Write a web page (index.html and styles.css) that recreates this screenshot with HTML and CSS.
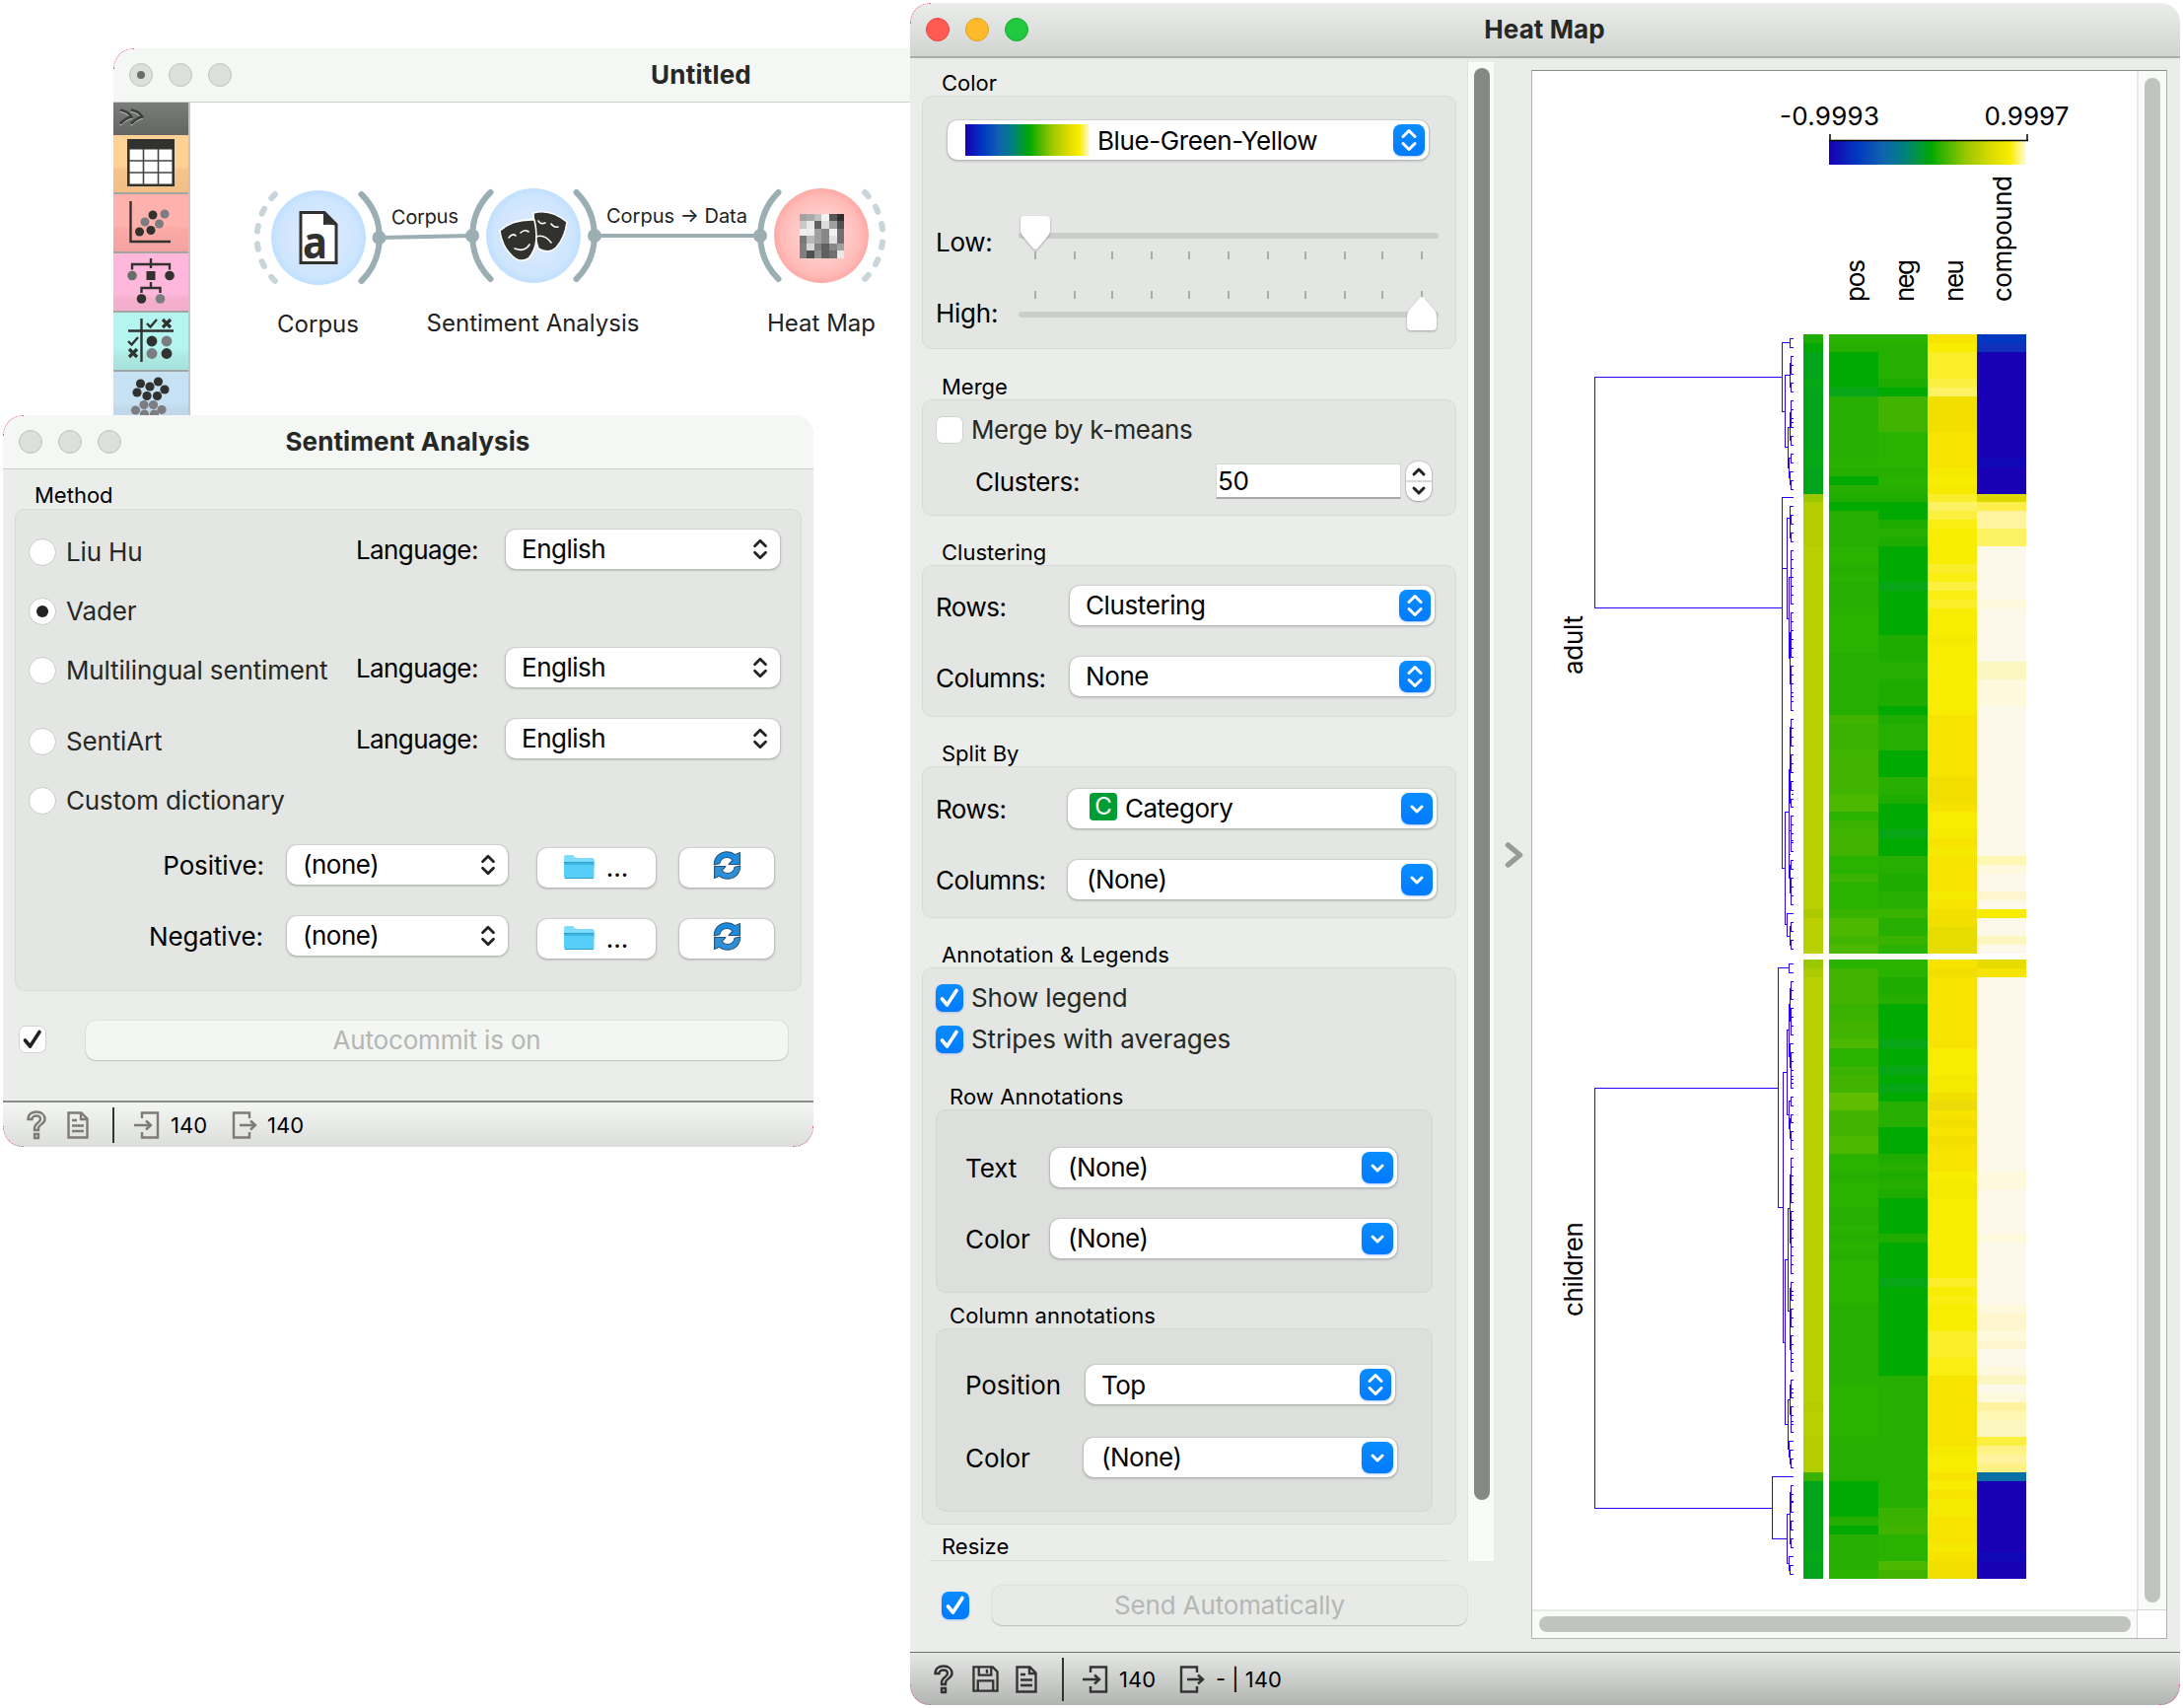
FILE: index.html
```html
<!DOCTYPE html>
<html lang="en">
<head>
<meta charset="utf-8">
<title>Heat Map</title>
<link rel="stylesheet" href="styles.css">
</head>
<body>
<svg class="defs" aria-hidden="true">
  <defs>
    <symbol id="updown" viewBox="0 0 16 24"><path d="M2 8.5 8 2.5l6 6M2 15.5l6 6 6-6"/></symbol>
    <symbol id="down" viewBox="0 0 16 24"><path d="M3 10l5 5 5-5"/></symbol>
    <symbol id="tick" viewBox="0 0 28 28"><path d="M6.500 15l5 6L21 6.500"/></symbol>
    <symbol id="folder" viewBox="0 0 32 26"><path fill="#7fdcfb" d="M1 3q0-2 2-2h7l3 3h17q1.500 0 1.500 2v8H1z"/><path fill="#3fb6e2" d="M1 8h30.500v4H1z"/><path fill="#57cef9" d="M1 11h30.500v12q0 1.500-1.500 1.500H2.500Q1 24.500 1 23z"/><path fill="#2aa3d6" d="M1 8h30.500v1H1zM2 24h29v1H2z"/></symbol>
    <symbol id="reload" viewBox="0 0 28 28"><g stroke="#24507a" stroke-width="1" stroke-linejoin="round"><path fill="#1c8ade" d="M1.200 13.500C1 6 7 .8 13.800.8c3.200 0 6 1.100 7.900 2.700L26.500 1.500v11.500H15.500L19.300 8.800C17.700 7.200 16 6.300 14 6.300c-4.200 0-6.800 3-7.300 6z"/><path fill="#2f8fd6" d="M26.800 14.500c.2 7.500-5.800 12.700-12.600 12.700-3.200 0-6-1.100-7.900-2.700L1.500 26.500V15h11l-3.800 4.200c1.600 1.600 3.300 2.500 5.300 2.500 4.200 0 6.800-3 7.300-6z"/></g></symbol>
    <symbol id="help" viewBox="0 0 20 30"><path d="M1.500 9C1.500 4 5 1.500 10 1.500S18.500 4.500 18.500 9c0 5-6.500 5.500-6.500 9v2H8v-2c0-5 6-5.500 6-9 0-2-1.500-3.500-4-3.500S5.500 7 5.500 9zM8 24h4v4H8z"/></symbol>
    <symbol id="doc" viewBox="0 0 22 28"><path d="M1.500 1.500h13l6 6v19h-19zM14 2v6h6M5 9h5M5 14.500h12M5 20h12"/></symbol>
    <symbol id="save" viewBox="0 0 28 28"><path d="M1.500 1.500h20l5 5v20h-25zM7 2v8h13V2M6 26V16h16v10M15.500 4v4"/></symbol>
    <symbol id="in" viewBox="0 0 26 28"><path d="M8 7V1.500h16v25H8V21M0 14h16M12 9.500l5 4.500-5 4.500"/></symbol>
    <symbol id="out" viewBox="0 0 26 28"><path d="M18 7V1.500H2v25h16V21M8 14h15M19 9.500l5 4.500-5 4.500"/></symbol>
  </defs>
</svg>

<section class="window canvas-window">
  <header class="titlebar"><div class="lights"><i class="edited"></i><i></i><i></i></div><h1>Untitled</h1></header>
  <div class="canvas-body">
    <nav class="dock">
      <div class="dock-head"><svg width="30" height="22"><path d="M2 4c5 1 9 3 11 7-4 1-8 4-11 7M13 4c5 1 9 3 11 7-4 1-8 4-11 7" fill="none" stroke="#c9cbc8" stroke-width="1.600"/><path d="M2 2.500c5 1 9 3 11 7-4 1-8 4-11 7M13 2.500c5 1 9 3 11 7-4 1-8 4-11 7" fill="none" stroke="#3c3e3c" stroke-width="2.800"/></svg></div>
      <div class="dock-item data"><svg width="48" height="48" viewBox="0 0 48 48"><path fill="#fff" stroke="#31312f" stroke-width="2.600" d="M1.300 1.300h45.400v45.400H1.300z"/><path fill="#31312f" d="M0 0h48v10.500H0z"/><path stroke="#444" d="M16.500 10v37M31.500 10v37M2 22h44M2 34h44" stroke-width="1.600"/></svg></div>
      <div class="dock-item visualize"><svg width="48" height="48" viewBox="0 0 48 48"><path d="M3.500 3v41H44" fill="none" stroke="#31312f" stroke-width="2.400"/><g fill="#31312f"><circle cx="26" cy="17" r="4.500"/><circle cx="12.500" cy="34" r="4.500"/><circle cx="24" cy="32.500" r="4.500"/></g><g fill="#7b7d80"><circle cx="38" cy="16" r="4.500"/><circle cx="18" cy="24" r="4.500"/><circle cx="32.500" cy="26" r="4.500"/></g></svg></div>
      <div class="dock-item model"><svg width="48" height="48" viewBox="0 0 48 48"><path d="M5 12.500V7h38v5.500M24 1v10M14.500 36v-5h19v5M24 25v6" fill="none" stroke="#31312f" stroke-width="2.400"/><path fill="#31312f" d="M19.500 14h9v9h-9z"/><circle cx="5" cy="18.500" r="4.800" fill="#6b6d6b"/><circle cx="43" cy="18.500" r="4.800" fill="#31312f"/><circle cx="14.500" cy="42" r="4.800" fill="#31312f"/><circle cx="33.500" cy="42" r="4.800" fill="#7b7d80"/></svg></div>
      <div class="dock-item evaluate"><svg width="48" height="48" viewBox="0 0 48 48"><path d="M14.500 2v44M1 14.500h46M20 7l3.500 3.500L30 3M1 25l3.500 3.500L11 21" fill="none" stroke="#31312f" stroke-width="2.400"/><path d="M36 3l8 8m0-8l-8 8M2 33l8 8m0-8l-8 8" stroke="#31312f" stroke-width="3.200"/><g fill="#31312f"><circle cx="25" cy="25" r="5.400"/><circle cx="40" cy="37.500" r="5.400"/></g><g fill="#7b7d80"><circle cx="40" cy="25" r="5.400"/><circle cx="25" cy="37.500" r="5.400"/></g></svg></div>
      <div class="dock-item unsupervised"><svg width="48" height="48" viewBox="0 0 48 48"><g fill="#31312f"><circle cx="13.500" cy="8" r="4.600"/><circle cx="31.500" cy="6" r="4.600"/><circle cx="23" cy="11" r="4.600"/><circle cx="38" cy="14" r="4.600"/><circle cx="10" cy="17" r="4.600"/><circle cx="20" cy="20.500" r="4.600"/><circle cx="30.500" cy="20.500" r="4.600"/></g><g fill="#7b7d80"><circle cx="17" cy="29.500" r="4.600"/><circle cx="26.500" cy="29.500" r="4.600"/><circle cx="8.500" cy="35" r="4.600"/><circle cx="35" cy="34.500" r="4.600"/><circle cx="17.500" cy="39" r="4.600"/><circle cx="27.500" cy="39" r="4.600"/></g></svg></div>
    </nav>
    <svg class="flow" viewBox="193 104 730 320" width="730" height="320">
      <defs>
        <radialGradient id="blue"><stop offset="0" stop-color="#e2ebfb"/><stop offset=".5" stop-color="#d6e8fe"/><stop offset=".85" stop-color="#cde5fe"/><stop offset="1" stop-color="#c0dfff"/></radialGradient>
        <radialGradient id="red"><stop offset="0" stop-color="#ffdad8"/><stop offset=".5" stop-color="#ffcbc8"/><stop offset=".85" stop-color="#ffbab6"/><stop offset="1" stop-color="#ffa9a5"/></radialGradient>
      </defs>
      <g fill="none" stroke="#9aaeb3" stroke-width="6" stroke-linecap="round">
        <path d="M366.500 197A62 62 0 0 1 366.500 285M497.500 195A62 62 0 0 0 497.500 283M584.500 195A62 62 0 0 1 584.500 283M789.500 195A62 62 0 0 0 789.500 283"/>
        <path d="M385 241L479 239M603 239H771" stroke-width="4"/>
        <g stroke="#c8d5da" stroke-dasharray="5.500 12.900"><path d="M279 197A62 62 0 0 0 279 285M877 195A62 62 0 0 1 877 283"/></g>
      </g>
      <g fill="#9aaeb3"><circle cx="384.500" cy="241" r="7"/><circle cx="479" cy="239" r="7"/><circle cx="603" cy="239" r="7"/><circle cx="771" cy="239" r="7"/></g>
      <circle cx="323" cy="241" r="48" fill="url(#blue)"/><circle cx="541" cy="239" r="48" fill="url(#blue)"/><circle cx="833" cy="239" r="48" fill="url(#red)"/>
      <path d="M305 215.500h24l12 12V266.500H305z" fill="#fff" stroke="#31312f" stroke-width="3"/><path d="M328 214v14q7-1 14 1v-2z" fill="#31312f"/>
      <text x="307" y="262" class="glyph-a" textLength="25" lengthAdjust="spacingAndGlyphs">a</text>
      <g fill="#31312f" stroke="#fff" stroke-width="1.600" stroke-linejoin="round">
        <path d="M541 216q17-5 34 9-2 16-11 26-8 7-18 1l-4-14z"/>
        <path d="M507 234q13-12 35-11 6 26-6 39-8 5-16-2-11-10-13-26z"/>
        <g fill="none" stroke-linecap="round"><path d="M546 224q2 4 7 2M559 227q3 4 7 3M544 240q8-3 15 6M516 241q4-5 7-2M528 236q4-4 8-1M522 252q10 4 15-4"/></g>
      </g>
      <g id="mosaic" shape-rendering="crispEdges"></g>
      <g class="link-label"><text x="397" y="227.500" textLength="68" transform="rotate(-1.200 397 227.500)">Corpus</text><text x="615" y="226" textLength="143">Corpus → Data</text></g>
      <g class="node-label"><text x="322.500" y="337">Corpus</text><text x="540.500" y="335.500">Sentiment Analysis</text><text x="833" y="335.500">Heat Map</text></g>
    </svg>
  </div>
</section>

<section class="window sentiment-window">
  <header class="titlebar"><div class="lights"><i></i><i></i><i></i></div><h1>Sentiment Analysis</h1></header>
  <div class="sentiment-body">
    <h2>Method</h2>
    <div class="group method">
      <div class="row"><span class="radio"><i></i>Liu Hu</span><span class="lang">Language:</span><span class="select plain">English<svg class="arrows"><use href="#updown"/></svg></span></div>
      <div class="row"><span class="radio on"><i></i>Vader</span></div>
      <div class="row"><span class="radio"><i></i>Multilingual sentiment</span><span class="lang">Language:</span><span class="select plain">English<svg class="arrows"><use href="#updown"/></svg></span></div>
      <div class="row gap-top"><span class="radio"><i></i>SentiArt</span><span class="lang">Language:</span><span class="select plain">English<svg class="arrows"><use href="#updown"/></svg></span></div>
      <div class="row"><span class="radio"><i></i>Custom dictionary</span></div>
      <div class="row file-row"><span class="file-label">Positive:</span><span class="select plain">(none)<svg class="arrows"><use href="#updown"/></svg></span><span class="button browse"><svg><use href="#folder"/></svg>...</span><span class="button reload"><svg><use href="#reload"/></svg></span></div>
      <div class="row file-row second"><span class="file-label">Negative:</span><span class="select plain">(none)<svg class="arrows"><use href="#updown"/></svg></span><span class="button browse"><svg><use href="#folder"/></svg>...</span><span class="button reload"><svg><use href="#reload"/></svg></span></div>
    </div>
    <div class="commit"><span class="check dark"><svg><use href="#tick"/></svg></span><span class="commit-button">Autocommit is on</span></div>
  </div>
  <footer class="statusbar"><svg class="i-help"><use href="#help"/></svg><svg class="i-doc"><use href="#doc"/></svg><b></b><svg class="i-io"><use href="#in"/></svg><span class="n-in">140</span><svg class="i-io"><use href="#out"/></svg><span>140</span></footer>
</section>

<section class="window heat-window">
  <header class="titlebar"><div class="lights"><i class="r"></i><i class="y"></i><i class="g"></i></div><h1>Heat Map</h1></header>
  <div class="heat-body">
    <aside class="sidebar">
      <div class="scroller">
        <div class="controls">
          <h2>Color</h2>
          <div class="group color-group">
            <span class="select palette-select"><i class="palette"></i>Blue-Green-Yellow<svg class="knob"><use href="#updown"/></svg></span>
            <div class="slider-row"><label>Low:</label><svg width="428" height="50" viewBox="1032 216 428 50"><path d="M1036 239H1456" class="track"/><path class="ticks" d="M1050 255v8M1090 255v8M1128 255v8M1168 255v8M1206 255v8M1246 255v8M1286 255v8M1324 255v8M1364 255v8M1402 255v8M1442 255v8"/><path class="thumb" d="M1039 219h22q4 0 4 4v11q0 3-2 5l-10 12q-3 4-6 0l-10-12q-2-2-2-5v-11q0-4 4-4z"/></svg></div>
            <div class="slider-row high"><label>High:</label><svg width="428" height="50" viewBox="1032 290 428 50"><path d="M1036 319H1456" class="track"/><path class="ticks" d="M1050 295v8M1090 295v8M1128 295v8M1168 295v8M1206 295v8M1246 295v8M1286 295v8M1324 295v8M1364 295v8M1402 295v8M1442 295v8"/><path class="thumb" d="M1431 335h22q4 0 4-4v-11q0-3-2-5l-10-12q-3-4-6 0l-10 12q-2 2-2 5v11q0 4 4 4z"/></svg></div>
          </div>
          <h2 class="h-merge">Merge</h2>
          <div class="group merge-group">
            <div class="check-row"><span class="check off"></span>Merge by k-means</div>
            <div class="spin-row"><label>Clusters:</label><span class="spin-field">50</span><span class="stepper"><svg width="26" height="40" viewBox="0 0 26 40"><path d="M8 13l5-5 5 5M8 27l5 5 5-5" fill="none" stroke="#222" stroke-width="3" stroke-linecap="round" stroke-linejoin="round"/><path d="M0 20h26" stroke="#ccc" stroke-width="1.500"/></svg></span></div>
          </div>
          <h2 class="h-cluster">Clustering</h2>
          <div class="group pair-group">
            <div class="field"><label>Rows:</label><span class="select">Clustering<svg class="knob"><use href="#updown"/></svg></span></div>
            <div class="field"><label>Columns:</label><span class="select">None<svg class="knob"><use href="#updown"/></svg></span></div>
          </div>
          <h2 class="h-split">Split By</h2>
          <div class="group pair-group wide">
            <div class="field"><label>Rows:</label><span class="select"><i class="cat">C</i>Category<svg class="knob"><use href="#down"/></svg></span></div>
            <div class="field"><label>Columns:</label><span class="select">(None)<svg class="knob"><use href="#down"/></svg></span></div>
          </div>
          <h2 class="h-annot">Annotation &amp; Legends</h2>
          <div class="group annot-group">
            <div class="check-row"><span class="check"><svg><use href="#tick"/></svg></span>Show legend</div>
            <div class="check-row"><span class="check"><svg><use href="#tick"/></svg></span>Stripes with averages</div>
            <h2>Row Annotations</h2>
            <div class="group inner row-inner">
              <div class="field"><label>Text</label><span class="select">(None)<svg class="knob"><use href="#down"/></svg></span></div>
              <div class="field"><label>Color</label><span class="select">(None)<svg class="knob"><use href="#down"/></svg></span></div>
            </div>
            <h2 class="h-col">Column annotations</h2>
            <div class="group inner col-inner">
              <div class="field"><label>Position</label><span class="select popup">Top<svg class="knob"><use href="#updown"/></svg></span></div>
              <div class="field"><label>Color</label><span class="select">(None)<svg class="knob"><use href="#down"/></svg></span></div>
            </div>
          </div>
          <h2 class="h-resize">Resize</h2>
          <div class="group resize-group"></div>
        </div>
        <div class="scrollbar"><i></i></div>
      </div>
      <div class="commit"><span class="check"><svg><use href="#tick"/></svg></span><span class="commit-button">Send Automatically</span></div>
    </aside>
    <div class="splitter"><svg width="20" height="26" viewBox="0 0 20 26"><path d="M3.500 3l12 10-12 10" fill="none" stroke="#999b99" stroke-width="5.500" stroke-linejoin="round" stroke-linecap="round"/></svg></div>
    <div class="view">
      <svg class="plot" id="plot" viewBox="1554 72 613 1560" width="613" height="1560">
        <defs><linearGradient id="ramp"><stop offset="0" stop-color="#1800b4"/><stop offset=".14" stop-color="#0037c0"/><stop offset=".27" stop-color="#1062b0"/><stop offset=".38" stop-color="#008080"/><stop offset=".52" stop-color="#00aa00"/><stop offset=".56" stop-color="#29b000"/><stop offset=".7" stop-color="#9cc800"/><stop offset=".83" stop-color="#dfdc00"/><stop offset=".92" stop-color="#f8ed00"/><stop offset=".97" stop-color="#fff78c"/><stop offset="1" stop-color="#fcf9ea"/></linearGradient></defs>
        <path fill="url(#ramp)" d="M1855 143h200v24H1855z"/>
        <path d="M1856 136v7M2056 136v7M1855 142.500h202" fill="none" stroke="#000" stroke-width="1.500"/>
        <g class="plot-text"><text x="1805" y="127" textLength="101">-0.9993</text><text x="2012.500" y="127" textLength="86">0.9997</text>
        <text transform="translate(1891 306) rotate(-90)" textLength="43">pos</text><text transform="translate(1941 306) rotate(-90)" textLength="43">neg</text><text transform="translate(1991 306) rotate(-90)" textLength="43">neu</text><text transform="translate(2040 306) rotate(-90)" textLength="128">compound</text>
        <text transform="translate(1605 684) rotate(-90)" textLength="60">adult</text><text transform="translate(1605 1335) rotate(-90)" textLength="96">children</text></g>
        <g id="cells" shape-rendering="crispEdges"></g>
        <g id="tree" shape-rendering="crispEdges"></g>
      </svg>
      <div class="vbar"><i></i></div>
      <div class="hbar"><i></i></div>
      <div class="corner"></div>
    </div>
  </div>
  <footer class="statusbar"><svg class="i-help"><use href="#help"/></svg><svg class="i-save"><use href="#save"/></svg><svg class="i-doc"><use href="#doc"/></svg><b></b><svg class="i-io"><use href="#in"/></svg><span class="n-in">140</span><svg class="i-io"><use href="#out"/></svg><span>- | 140</span></footer>
</section>
<script src="plot.js"></script>
</body>
</html>
```
FILE: plot.js
```js
const SVG = 'http://www.w3.org/2000/svg';

function add(parent, name, attrs) {
  const el = document.createElementNS(SVG, name);
  for (const key in attrs) el.setAttribute(key, attrs[key]);
  parent.appendChild(el);
}

// Palette keys used by the row runs below.
const C = {
  g0: '#00aa00', g1: '#1eac00', g2: '#26ae00', g3: '#29b200', g4: '#3ab200', g5: '#40b400', g6: '#4db800', g7: '#5fbc00',
  t0: '#06a618', t1: '#00a51b', t2: '#06a714',
  s0: '#9cc800', s1: '#abcb00', s2: '#b3cd00', s3: '#bacf00',
  y0: '#e6dc00', y1: '#f1df00', y2: '#f6e300', y3: '#f5e900', y4: '#f8ec00', y5: '#f9ed12', y6: '#faee2b', y7: '#fbf040', y8: '#fdf264', y9: '#ecdb08',
  b0: '#1800b4', b1: '#1008b8', b2: '#0f30ba', b3: '#0038c0', b4: '#0870a4',
  c0: '#fcf9ea', c1: '#fef8dc', c2: '#fff6d0', c3: '#fcf7c0', c4: '#fff7b4', c5: '#fff3a0', c6: '#fff284', c7: '#dcd900', c8: '#fdee4b'
};

const columns = [
  { x: 1829, w: 20, top: 'g1 g0 t1*3 t2 t1*7 t2*2 t1*3 s0 s2*5 s3*41 s1 s3*4', bottom: 's0 s1 s3*48 s2 s3*3 s2*4 g4 t1*8 t2 t1*2' },
  { x: 1855, w: 50, top: 'g3 g2 g0*4 t0 g2*7 g3 g2 g0 g2 g1 g0 g2*4 g3*2 g2 g3 g2*3 g3*5 g2*7 g5 g4*3 g5*5 g6*2 g3 g4 g5*3 g3*2 g4 g3*3 g4 g6*2 g5 g6',
    bottom: 'g3 g5*4 g4*2 g5*2 g6 g3*2 g4 g5*2 g7*2 g5*3 g6*2 g3*2 g2 g3*3 g2*2 g3 g2 g3 g2 g3*5 g2*9 g3*6 g2*5 g0*4 g2 g0 g2*4 g3' },
  { x: 1905, w: 50, top: 'g3 g2*4 g1 g0 g5*4 g3*4 g2 g3 g2 g1 g0*2 g1 g2 g1 g0*4 t0 g0*5 g1*3 g2*2 g1*3 g0 g1 g2*3 g0*3 g2*2 g1 g0*3 t0 g0*2 g2*2 g1*2 g2*2 g4 g2*2 g4 g3',
    bottom: 'g3*2 g1*2 g2 g0*4 t0 g0*2 t0 g0 t0 g0 g2*3 g0*3 g1 g2 g1 g2 g1 g0*4 g1 g0*4 t0 g0*10 g2*15 g4*2 g5 g3*3 g6 g5' },
  { x: 1955, w: 50, top: 'y2 y4 y6*3 y7 y8 y1*4 y2*4 y3 y4 y3 y6 y8 y7 y5 y4*4 y6 y5 y7 y5 y6 y4*3 y3 y4*8 y2*7 y1*3 y2 y4*2 y3 y2 y3 y2*4 y3 y2 y1*2 y0*3',
    bottom: 'y2 y1 y2*8 y4*3 y3*2 y1 y9 y2 y1 y2 y1 y2*3 y4 y3*2 y4*9 y6 y4 y5 y4*3 y6*3 y5*2 y2*8 y3 y4*2 y2 y4 y2 y3*2 y2*3 y3 y2 y1*2' },
  { x: 2005, w: 50, top: 'b3 b2 b0*12 b1 b0*3 c7 c8 c5*2 y8 y8 c0*6 c1 c0*6 c3*2 c1*3 c0*17 c4 c1 c0*2 c2 c0 y4 c0*2 c3 c0',
    bottom: 'y0 y2 c0*22 c1*2 c0*5 c1 c0*7 c1 c2*2 c1 c2 c0*2 c1 c3 c0 c1 c5 c4 c3*2 y7 c6 c5 c6 b4 b0*8 b1 b0*2' }
];

const ROW = 628 / 70;
const cells = document.getElementById('cells');

function drawRuns(runs, x, w, top) {
  let row = 0;
  for (const run of runs.split(' ')) {
    const [key, count] = run.split('*');
    const next = row + Number(count || 1);
    const y0 = top + Math.round(row * ROW + 0.02);
    const y1 = top + Math.round(next * ROW + 0.02);
    add(cells, 'rect', { x, y: y0, width: w, height: y1 - y0, fill: C[key] });
    row = next;
  }
}
for (const c of columns) {
  drawRuns(c.top, c.x, c.w, 339);
  drawRuns(c.bottom, c.x, c.w, 973);
}

const brackets = {
  320: [
    [-489, 148, 704, 82, 82],
    [82, 65, 232, 106, 91], [106, 56, 77, 114, 114], [91, 144, 317, 106, 100], [106, 115, 173, 109, 109], [109, 98, 141, 114, 114], [109, 163, 184, 114, 114],
    [100, 269, 367, 106, 103], [106, 235, 301, 109, 109], [109, 205, 269, 114, 114], [109, 291, 312, 114, 114], [103, 343, 391, 106, 106], [109, 333, 355, 114, 114], [106, 376, 407, 114, 109], [109, 398, 420, 114, 114],
    [82, 438, 1331, 114, 91], [97, 488, 730, 106, 103], [106, 460, 535, 114, 109], [109, 480, 502, 114, 114], [109, 524, 545, 114, 114],
    [103, 632, 826, 109, 106], [109, 566, 695, 114, 114], [106, 764, 888, 109, 109], [109, 716, 823, 114, 114], [109, 844, 951, 114, 114],
    [91, 1196, 1467, 103, 97], [103, 1093, 1356, 106, 106], [106, 991, 1175, 109, 109], [109, 973, 1037, 114, 114], [109, 1058, 1101, 114, 114], [109, 1122, 1144, 114, 114], [109, 1165, 1185, 114, 114],
    [109, 1206, 1291, 114, 114], [106, 1324, 1390, 109, 109], [109, 1312, 1333, 114, 114], [109, 1355, 1419, 114, 114],
    [97, 1441, 1496, 114, 106], [106, 1472, 1516, 109, 109], [109, 1462, 1483, 114, 114], [109, 1505, 1526, 114, 114]
  ],
  960: [
    [-489, 341, 1353, 70, 52],
    [70, 51, 628, 103, 85], [103, 41, 63, 114, 114], [85, 303, 954, 97, 91], [97, 201, 405, 103, 103], [103, 138, 264, 106, 106], [106, 100, 180, 109, 109], [109, 84, 127, 114, 114], [109, 148, 212, 114, 114],
    [106, 234, 290, 114, 109], [109, 255, 341, 114, 114], [103, 372, 438, 109, 106], [109, 362, 383, 114, 114], [106, 414, 462, 109, 109], [109, 405, 424, 114, 114], [109, 445, 488, 114, 114],
    [91, 754, 1151, 100, 100], [100, 632, 878, 106, 106], [106, 551, 714, 109, 109], [109, 509, 616, 114, 114], [109, 638, 787, 114, 114], [106, 824, 971, 109, 109], [109, 809, 852, 114, 114], [109, 873, 916, 114, 114], [109, 937, 1023, 114, 114],
    [100, 1091, 1211, 106, 103], [106, 1057, 1127, 109, 109], [109, 1044, 1087, 114, 114], [109, 1108, 1170, 114, 114], [103, 1191, 1230, 114, 106], [106, 1213, 1246, 114, 109], [109, 1234, 1255, 114, 114],
    [52, 1277, 1426, 114, 97], [97, 1367, 1486, 106, 103], [106, 1316, 1438, 109, 109], [109, 1298, 1362, 114, 114], [109, 1384, 1405, 114, 114], [109, 1426, 1448, 114, 114], [103, 1469, 1502, 114, 106], [106, 1491, 1512, 114, 114]
  ]
};
const leaves = {
  320: [120, 227, 248, 258, 588, 609, 631, 652, 673, 737, 759, 780, 802, 866, 887, 909, 918, 930, 994, 1016, 1080, 1154, 1227, 1248, 1265, 1270, 1377, 1398],
  960: [106, 170, 191, 277, 298, 312, 319, 329, 467, 531, 552, 574, 595, 659, 681, 702, 723, 745, 766, 830, 840, 894, 958, 980, 994, 1001, 1065, 1075, 1129, 1144, 1151, 1320, 1336, 1340]
};
const extra = { 320: [[609, 82, 97], [1242, 103, 109], [1299, 103, 107]], 960: [] };

let d = '';
for (const top of [320, 960]) {
  const X = x => Math.floor(1780 + x / 3) + 0.5;
  const Y = y => Math.floor(top + y / 2.376) + 0.5;
  for (const [x, y1, y2, a, b] of brackets[top]) d += `M${X(a)} ${Y(y1)}H${X(x)}V${Y(y2)}H${X(b)}`;
  for (const y of leaves[top]) d += `M${X(109)} ${Y(y)}H${X(114)}`;
  for (const [y, a, b] of extra[top]) d += `M${X(a)} ${Y(y)}H${X(b)}`;
}
add(document.getElementById('tree'), 'path', { d, fill: 'none', stroke: '#2a00ff', 'stroke-width': 1 });

// Heat map node icon: 6 by 6 grey mosaic.
const greys = [
  'a2 aa c0 f2 58 30', 'c8 e8 60 dc a0 50', 'ee ec a0 88 f0 70', '78 b8 a0 88 e0 70', '80 d8 80 60 88 a0', '80 50 90 60 70 e8'
];
greys.forEach((line, r) => line.split(' ').forEach((v, c) => {
  add(document.getElementById('mosaic'), 'rect', { x: 810.5 + c * 7.6, y: 216.5 + r * 7.5, width: 7.6, height: 7.5, fill: '#' + v + v + v });
}));
```
FILE: styles.css
```css
* { box-sizing: border-box; }
body { margin: 0; width: 2214px; height: 1732px; position: relative; overflow: hidden; background: #fff; color: #000; font: 26px/30px Inter, "Liberation Sans", sans-serif; letter-spacing: -0.25px; }
.defs { position: absolute; width: 0; height: 0; }
h1, h2 { margin: 0; }
h2 { font-size: 22px; line-height: 26px; font-weight: 400; height: 26px; white-space: nowrap; letter-spacing: 0; }

.window { position: absolute; display: flex; flex-direction: column; border-radius: 20px; overflow: hidden; background: #ebedea; }
.window::before, .heat-window::after, .sentiment-window::after, .statusbar::before { content: ""; position: absolute; z-index: 2; width: 20px; height: 20px; border: 0 dotted #f0509a; }
.window::before { left: 0; top: 0; border-width: 1px 0 0 1px; border-top-left-radius: 20px; }
.heat-window::after, .sentiment-window::after { right: 0; bottom: 0; border-width: 0 1px 1px 0; border-bottom-right-radius: 20px; }
.statusbar::before { left: 0; bottom: 0; border-width: 0 0 1px 1px; border-bottom-left-radius: 20px; }
.titlebar { flex: none; display: flex; align-items: center; justify-content: center; position: relative; height: 55px; background: #f5f7f4; border-bottom: 1px solid #cfd1cf; }
.titlebar h1 { font-size: 26px; line-height: 30px; font-weight: 700; color: #262826; letter-spacing: 0.1px; padding-right: 1px; }
.canvas-window h1 { letter-spacing: 0.2px; padding: 0; }
.lights { position: absolute; left: 16px; top: 15px; display: flex; gap: 16px; }
.lights i { width: 24px; height: 24px; border-radius: 50%; background: #dddfdc; border: 1px solid #bfc1be; display: grid; place-items: center; }
.lights .edited::after { content: ""; width: 8px; height: 8px; border-radius: 50%; background: #6b6d6b; }

.canvas-window { left: 115px; top: 49px; width: 1192px; height: 500px; background: #fff; border-bottom-left-radius: 0; }
.canvas-body { display: flex; flex: 1; }
.dock { width: 78px; border-right: 2px solid #c3c6c4; display: flex; flex-direction: column; }
.dock-head { height: 33px; padding: 3px 5px; background: linear-gradient(#7b7d7a, #636562); flex: none; }
.dock-item { height: 60px; flex: none; border-bottom: 2px solid #a2a6a3; display: grid; place-items: center; padding-bottom: 2px; }
.data { background: linear-gradient(#ffd195 55%, #f6c38a 60%, #f2be88); }
.visualize { background: linear-gradient(#ffb1ad 55%, #fba9a5 60%, #f5a3a0); }
.model { background: linear-gradient(#ffb8db 70%, #f3aecd 80%); }
.evaluate { background: linear-gradient(#b4f5f0 60%, #aeeae5 75%, #a7e0dc); }
.unsupervised { background: linear-gradient(#c6e1f3 55%, #c0d8ea 65%); }
.flow { display: block; letter-spacing: 0; }
.glyph-a { font: 700 44px "Noto Sans", "Open Sans", sans-serif; fill: #31312f; }
.link-label text { font-size: 20px; fill: #222; }
.node-label text { font-size: 24px; fill: #222; text-anchor: middle; }

.group { border: 1px solid #d9dbd8; border-radius: 10px; background: #e4e6e3; }
.select, .button { position: relative; display: flex; align-items: center; height: 40px; border-radius: 10px; background: #fff; box-shadow: 0 0 1px 1px rgba(0,0,0,.06), 0 1px 2px 1px rgba(0,0,0,.14); padding-left: 16px; white-space: nowrap; letter-spacing: -0.5px; }
.arrows { position: absolute; right: 12px; top: 9px; width: 16px; height: 22px; fill: none; stroke: #222; stroke-width: 3; stroke-linecap: round; stroke-linejoin: round; }
.knob { position: absolute; right: 4px; top: 4px; width: 32px; height: 32px; padding: 4px; border-radius: 8px; background: linear-gradient(#0a8dff, #007aff); fill: none; stroke: #fff; stroke-width: 3; stroke-linecap: round; stroke-linejoin: round; box-shadow: 0 1px 2px rgba(0,100,255,.35); }
.check { width: 28px; height: 28px; flex: none; border-radius: 7px; background: linear-gradient(#0a8dff, #007aff); display: block; box-shadow: 0 1px 2px rgba(0,100,255,.3); }
.check svg { display: block; width: 28px; height: 28px; fill: none; stroke: #fff; stroke-width: 3.6; stroke-linecap: round; stroke-linejoin: round; }
.check.dark, .check.off { background: #fff; box-shadow: inset 0 0 0 1px #d0d2d0; }
.check.dark svg { stroke: #222; }
.commit { display: flex; align-items: center; }
.commit-button { height: 40px; border-radius: 10px; display: grid; place-items: center; color: #b5b7b5; background: #f4f6f3; box-shadow: 0 0 1px 1px rgba(0,0,0,.05), 0 1px 1px rgba(0,0,0,.15); }
.statusbar { flex: none; display: flex; align-items: center; font-size: 22px; letter-spacing: 0; border-top: 2px solid #8b8d8a; background: linear-gradient(#f4f6f3, #dcdedb); }
.statusbar svg { fill: none; stroke: #7d7a78; stroke-width: 2.4; flex: none; }
.statusbar b { width: 2px; height: 36px; background: #333; }
.i-help { width: 20px; height: 30px; } .i-doc { width: 22px; height: 28px; } .i-save { width: 27px; height: 27px; } .i-io { width: 26px; height: 28px; }

.sentiment-window { left: 3px; top: 421px; width: 822px; height: 742px; }
.sentiment-body { flex: 1; padding: 13px 12px 0; }
.sentiment-body h2 { padding-left: 20px; letter-spacing: 0; height: 27px; }
.method { height: 489px; padding: 10px 0 0 13px; }
.row { display: flex; align-items: center; height: 60px; }
.radio { display: flex; align-items: center; gap: 10px; width: 332px; margin-top: 5px; color: #262826; white-space: nowrap; letter-spacing: -0.15px; }
.radio i { width: 28px; height: 28px; border-radius: 50%; background: #fff; border: 1px solid #c9cbc8; display: grid; place-items: center; }
.radio.on i::after { content: ""; width: 12px; height: 12px; border-radius: 50%; background: #222; }
.lang { width: 152px; margin-top: 2px; letter-spacing: -0.6px; }
.row .select { width: 278px; }
.gap-top { margin-top: 12px; }
.file-row { margin-top: 8px; } .file-row.second { margin-top: 12px; }
.file-label { width: 239px; text-align: right; margin-top: 2px; letter-spacing: -0.1px; }
.second .file-label { padding-right: 1px; }
.row.file-row .select { width: 224px; margin-left: 23px; }
.button { margin-top: 5px; justify-content: center; padding: 0; letter-spacing: 0; }
.browse { width: 120px; margin-left: 30px; gap: 12px; } .browse svg { width: 32px; height: 26px; margin: -2px 0 0 -2px; }
.reload { width: 96px; margin-left: 24px; } .reload svg { width: 29px; height: 29px; margin-top: -4px; }
.sentiment-body .commit { margin-top: 30px; padding-left: 4px; gap: 40px; }
.sentiment-body .commit-button { width: 712px; padding-bottom: 1px; letter-spacing: -0.15px; }
.sentiment-body .check { margin-top: -3px; }
.sentiment-window .statusbar { height: 47px; padding: 0 0 0 24px; }
.sentiment-window .i-doc { margin-left: 21px; } .sentiment-window b { margin-left: 24px; } .sentiment-window b + .i-io { margin-left: 20px; } .n-in { margin: 0 25px 0 11px; } .statusbar span:last-child { margin-left: 10px; }

.heat-window { left: 923px; top: 3px; width: 1288px; height: 1726px; }
.heat-window .titlebar { height: 56px; background: linear-gradient(#ebedea, #d2d4d1); border-bottom: 2px solid #acaeab; }
.heat-window .r { background: #ff5b52; border-color: #e2463f; } .heat-window .y { background: #fdbb2c; border-color: #dfa023; } .heat-window .g { background: #20c93f; border-color: #1aab2e; }
.heat-body { flex: 1; display: grid; grid-template-columns: 592px 38px 645px; align-items: start; }
.scroller { display: flex; height: 1524px; }
.controls { width: 566px; padding: 12px 11px 0 12px; overflow: hidden; border-right: 1px solid #e0e2df; }
.controls h2 { padding-left: 20px; }
.scrollbar { width: 26px; margin-top: 4px; background: #f9fbf8; padding: 6px 4px; }
.scrollbar i { display: block; width: 16px; margin-left: 2px; height: 1452px; border-radius: 8px; background: #868885; }
.color-group { height: 257px; padding: 24px 0 0 13px; }
.palette-select { width: 488px; margin-left: 12px; padding: 1px 0 0 18px; letter-spacing: -0.4px; }
.palette { width: 126px; height: 32px; margin: -1px 8px 0 0; background: linear-gradient(90deg, #1800b4, #0037c0 14%, #1062b0 27%, #008080 38%, #00aa00 52%, #29b000 56%, #9cc800 70%, #dfdc00 83%, #f8ed00 92%, #fff78c 97%, #fcf9ea); }
.slider-row { display: flex; margin-top: 54px; height: 50px; align-items: center; }
.slider-row.high { margin-top: 24px; }
.slider-row label { width: 83px; padding-top: 10px; }
.slider-row.high label { padding-top: 5px; }
.track { stroke: #cccecb; stroke-width: 6; stroke-linecap: round; } .ticks { stroke: #aaacaa; stroke-width: 2; } .thumb { fill: #fff; filter: drop-shadow(0 1px 1px rgba(0,0,0,.3)); }
.h-merge { margin-top: 25px; }
.merge-group { height: 118px; padding: 15px 0 0 13px; }
.check-row { display: flex; align-items: center; gap: 8px; height: 30px; color: #262826; letter-spacing: -0.1px; }
.merge-group .check-row { letter-spacing: -0.4px; }
.spin-row { display: flex; align-items: center; margin-top: 17px; height: 40px; letter-spacing: -0.3px; }
.spin-row label { padding: 2px 0 0 40px; width: 284px; }
.spin-field { width: 188px; height: 36px; background: #fff; border: 1px solid #d5d7d5; border-bottom: 2px solid #aaa; padding: 2px 1px; }
.stepper { margin-left: 5px; width: 26px; height: 40px; border-radius: 12px; background: #fff; box-shadow: 0 0 1px 1px rgba(0,0,0,.12), 0 1px 2px rgba(0,0,0,.2); }
.stepper svg { display: block; }
.h-cluster { margin-top: 24px; }
.pair-group { height: 154px; padding: 20px 0 0 13px; }
.field { display: flex; align-items: center; height: 40px; }
.field + .field { margin-top: 32px; }
.field label { width: 136px; padding-top: 3px; letter-spacing: -0.5px; }
.pair-group .select { width: 370px; letter-spacing: -0.4px; }
.wide.pair-group { padding-top: 22px; } .wide label { width: 134px; padding-top: 1px; } .wide .select { width: 374px; padding-left: 19px; letter-spacing: -0.5px; }
.cat { width: 28px; height: 28px; margin: -5px 8px 0 3px; border-radius: 4px; background: #009d35; color: #fff; font-style: normal; display: grid; place-items: center; font-size: 24px; line-height: 28px; letter-spacing: 0; }
.h-split, .h-annot { margin-top: 24px; }
.h-annot { letter-spacing: 0.1px; }
.annot-group { height: 565px; padding: 15px 0 0 13px; }
.annot-group .check-row + .check-row { margin-top: 12px; }
.annot-group h2 { padding-left: 14px; margin-top: 30px; letter-spacing: 0.08px; }
.annot-group .h-col { margin-top: 10px; }
.inner { width: 504px; background: #dddfdc; border-color: #d3d5d2; }
.inner label { letter-spacing: -0.1px; padding-top: 1px; }
.row-inner { height: 186px; padding: 38px 0 0 29px; } .row-inner label { width: 86px; } .inner .select { width: 352px; padding-left: 18px; }
.col-inner { height: 186px; padding: 36px 0 0 29px; } .col-inner label { width: 120px; } .col-inner .select { width: 318px; } .col-inner .popup { width: 314px; margin-left: 2px; padding: 1px 0 0 16px; } .col-inner .field + .field { margin-top: 34px; }
.h-resize { margin-top: 9px; }
.resize-group { height: 40px; margin-top: 1px; }
.sidebar .commit { height: 90px; padding: 0 0 0 32px; gap: 23px; }
.sidebar .commit-button { width: 482px; background: #e8eae7; letter-spacing: -0.15px; }
.splitter { align-self: start; padding: 795px 0 0 11px; }
.view { margin-top: 12px; height: 1591px; display: grid; grid-template: 1560px 29px / 613px 30px; border: 1px solid #aeb1ad; border-top-color: #8b8d8a; background: #fff; letter-spacing: 0; }
.plot { display: block; }
.plot-text text { font-size: 26px; fill: #000; }
.vbar { background: #f9fbf8; border-left: 2px solid #e8eae7; padding: 7px 0 0 6px; } .vbar i { display: block; width: 16px; height: 1546px; border-radius: 8px; background: #c1c3c0; }
.hbar { background: #f9fbf8; border-top: 2px solid #e8eae7; padding: 5px 0 0 7px; } .hbar i { display: block; height: 16px; width: 600px; border-radius: 8px; background: #c1c3c0; }
.corner { border: 1px solid #d4d6d3; border-width: 1px 0 0 1px; }
.heat-window .statusbar { height: 54px; padding-left: 24px; border-color: #6f716e; border-top-width: 1px; background: linear-gradient(#e6e8e5, #b2b4b1); }
.heat-window .statusbar svg { stroke: #333; } .heat-window .i-save { margin-left: 19px; } .heat-window .i-doc { margin-left: 17px; } .heat-window b { height: 44px; margin-left: 25px; } .heat-window b + .i-io { margin-left: 19px; } .heat-window .n-in { margin-right: 24px; } .heat-window .statusbar span:last-child { margin-left: 11px; }
```
